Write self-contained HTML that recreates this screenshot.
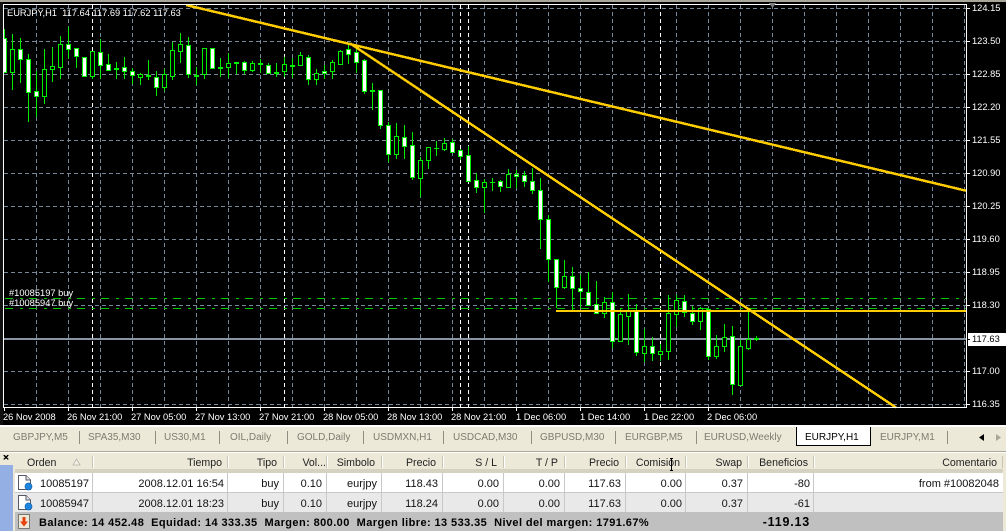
<!DOCTYPE html>
<html><head><meta charset="utf-8"><style>
html,body{margin:0;padding:0;width:1006px;height:531px;overflow:hidden;background:#ECE9D8}
svg{display:block;position:absolute;left:0;top:0}
text{font-family:"Liberation Sans",sans-serif;white-space:pre}
.c text{font-size:9.3px;fill:#fff}
.t text{font-size:10px;fill:#7c7c70}
.h text{font-size:10.6px;fill:#222}
.r text{font-size:11px;fill:#111}
.e{text-anchor:end}
.b text{font-size:11px;font-weight:bold;fill:#000;letter-spacing:.41px}
.b text.s{font-size:12.5px;letter-spacing:.8px}
</style></head><body>
<svg width="1006" height="531" viewBox="0 0 1006 531" xmlns="http://www.w3.org/2000/svg">
<rect x="0" y="0" width="1006" height="427" fill="#000"/>
<rect x="0" y="0" width="1006" height="2" fill="#a8a698"/>
<g shape-rendering="crispEdges">
<path fill="none" stroke="#778899" stroke-dasharray="4 3" d="M4 8.5H966M4 41.5H966M4 74.5H966M4 107.5H966M4 140.5H966M4 173.5H966M4 206.5H966M4 239.5H966M4 272.5H966M4 305.5H966M4 371.5H966M4 404.5H966"/>
<path fill="none" stroke="#778899" stroke-dasharray="4 3" d="M36.5 5V407M68.5 5V407M100.5 5V407M132.5 5V407M164.5 5V407M196.5 5V407M228.5 5V407M260.5 5V407M292.5 5V407M324.5 5V407M356.5 5V407M388.5 5V407M420.5 5V407M452.5 5V407M484.5 5V407M516.5 5V407M548.5 5V407M580.5 5V407M612.5 5V407M644.5 5V407M676.5 5V407M708.5 5V407M740.5 5V407M772.5 5V407M804.5 5V407M836.5 5V407M868.5 5V407M900.5 5V407M932.5 5V407M964.5 5V407"/>
<path fill="none" stroke="#fff" stroke-dasharray="4 3" d="M92.5 5V407M284.5 5V407M460.5 5V407M468.5 5V407M660.5 5V407"/>
<rect x="4" y="338" width="962" height="2" fill="#8a95a3"/>
<path fill="none" stroke="#00c800" stroke-dasharray="8 7 3 6" d="M5 298.5H966M5 308.5H966"/>
<path fill="none" stroke="#00ee00" d="M4.5 29V73M12.5 34V90M20.5 38V83M28.5 54V122M36.5 71V117M44.5 49V104M52.5 47V82M60.5 36V79M68.5 27V59M76.5 48V68M84.5 57V77M92.5 51V79M100.5 39V79M108.5 54V71M116.5 62V79M124.5 57V79M132.5 68V84M140.5 73V85M148.5 60V80M156.5 71V96M164.5 69V91M172.5 42V80M180.5 33V63M188.5 37V78M196.5 67V85M204.5 48V79M212.5 48V68M220.5 58V77M228.5 53V78M236.5 62V74M244.5 61V74M252.5 61V72M260.5 59V73M268.5 63V74M276.5 63V77M284.5 57V77M292.5 58V78M300.5 52V65M308.5 55V85M316.5 69V85M324.5 65V79M332.5 60V79M340.5 50V65M348.5 44V64M356.5 47V73M364.5 59V94M372.5 83V110M380.5 90V129M388.5 122V162M396.5 123V159M404.5 125V159M412.5 132V180M420.5 157V197M428.5 147V169M436.5 141V156M444.5 138V151M452.5 139V152M460.5 149V160M468.5 146V182M476.5 173V193M484.5 179V213M492.5 178V191M500.5 180V192M508.5 169V187M516.5 170V188M524.5 171V187M532.5 168V194M540.5 178V249M548.5 215V282M556.5 259V308M564.5 260V289M572.5 267V310M580.5 275V308M588.5 272V306M596.5 281V313M604.5 297V318M612.5 292V348M620.5 308V342M628.5 294V345M636.5 304V356M644.5 329V362M652.5 337V361M660.5 344V361M668.5 295V360M676.5 295V327M684.5 295V317M692.5 306V325M700.5 307V330M708.5 308V360M716.5 335V359M724.5 324V352M732.5 326V395M740.5 340V385M748.5 310V350M756.5 336V341"/>
<path fill="#00ee00" d="M114 68h5v2h-5zM194 75h5v2h-5zM218 67h5v2h-5zM234 62h5v2h-5zM258 63h5v2h-5zM274 72h5v2h-5zM290 65h5v2h-5zM370 90h5v2h-5zM434 148h5v1h-5zM490 182h5v1h-5zM754 338h5v2h-5z"/>
<path fill="#000" stroke="#00ee00" d="M10.5 49.5h4v23h-4zM42.5 69.5h4v27h-4zM50.5 66.5h4v3h-4zM58.5 44.5h4v23h-4zM90.5 51.5h4v25h-4zM138.5 74.5h4v3h-4zM162.5 74.5h4v13h-4zM170.5 50.5h4v26h-4zM178.5 44.5h4v7h-4zM202.5 48.5h4v26h-4zM226.5 63.5h4v4h-4zM250.5 63.5h4v7h-4zM282.5 64.5h4v7h-4zM298.5 55.5h4v10h-4zM314.5 73.5h4v6h-4zM330.5 62.5h4v9h-4zM338.5 51.5h4v13h-4zM394.5 136.5h4v18h-4zM418.5 160.5h4v18h-4zM426.5 147.5h4v13h-4zM442.5 143.5h4v6h-4zM482.5 182.5h4v5h-4zM506.5 174.5h4v13h-4zM562.5 276.5h4v11h-4zM602.5 302.5h4v11h-4zM618.5 314.5h4v27h-4zM626.5 311.5h4v5h-4zM642.5 346.5h4v7h-4zM658.5 351.5h4v3h-4zM666.5 313.5h4v38h-4zM674.5 300.5h4v14h-4zM698.5 308.5h4v13h-4zM714.5 346.5h4v10h-4zM722.5 337.5h4v9h-4zM738.5 346.5h4v39h-4zM746.5 339.5h4v9h-4z"/>
<path fill="#fff" stroke="#00ee00" d="M2.5 38.5h4v34h-4zM18.5 49.5h4v10h-4zM26.5 59.5h4v33h-4zM34.5 91.5h4v5h-4zM66.5 44.5h4v5h-4zM74.5 48.5h4v8h-4zM82.5 57.5h4v19h-4zM98.5 52.5h4v13h-4zM106.5 64.5h4v6h-4zM122.5 67.5h4v4h-4zM130.5 71.5h4v4h-4zM146.5 75.5h4v1h-4zM154.5 77.5h4v10h-4zM186.5 45.5h4v29h-4zM210.5 48.5h4v20h-4zM242.5 62.5h4v8h-4zM266.5 65.5h4v8h-4zM306.5 57.5h4v22h-4zM322.5 71.5h4v2h-4zM346.5 49.5h4v5h-4zM354.5 52.5h4v10h-4zM362.5 60.5h4v31h-4zM378.5 90.5h4v35h-4zM386.5 125.5h4v29h-4zM402.5 137.5h4v9h-4zM410.5 145.5h4v32h-4zM450.5 142.5h4v10h-4zM458.5 150.5h4v6h-4zM466.5 155.5h4v26h-4zM474.5 180.5h4v7h-4zM498.5 181.5h4v5h-4zM514.5 174.5h4v2h-4zM522.5 175.5h4v6h-4zM530.5 181.5h4v9h-4zM538.5 190.5h4v29h-4zM546.5 219.5h4v40h-4zM554.5 259.5h4v28h-4zM570.5 276.5h4v12h-4zM578.5 288.5h4v3h-4zM586.5 292.5h4v13h-4zM594.5 304.5h4v9h-4zM610.5 302.5h4v39h-4zM634.5 311.5h4v41h-4zM650.5 346.5h4v7h-4zM682.5 301.5h4v11h-4zM690.5 313.5h4v8h-4zM706.5 309.5h4v47h-4zM730.5 336.5h4v48h-4z"/>
<path fill="none" stroke="#FFCC00" stroke-width="2.5" d="M186 5L966 190.7M350 43.4L896 407.5"/>
<path fill="none" stroke="#FFCC00" stroke-width="2" d="M556 311H966"/>
<path fill="none" stroke="#fff" d="M3.5 4V408M3 4.5H967M966.5 4V408M3 407.5H967"/>
<path fill="none" stroke="#fff" d="M967 8.5h3M967 41.5h3M967 74.5h3M967 107.5h3M967 140.5h3M967 173.5h3M967 206.5h3M967 239.5h3M967 272.5h3M967 305.5h3M967 371.5h3M967 404.5h3M68.5 408v3M132.5 408v3M196.5 408v3M260.5 408v3M324.5 408v3M388.5 408v3M452.5 408v3M516.5 408v3M580.5 408v3M644.5 408v3M708.5 408v3M4.5 408v3"/>
<polygon points="769,3 776,3 772.5,8" fill="#808080"/>
<rect x="0" y="2" width="3" height="423" fill="#111"/>
<rect x="0" y="425" width="1006" height="2" fill="#fff"/>
<rect x="0" y="427" width="1006" height="104" fill="#ECE9D8"/>
<rect x="968" y="333" width="38" height="13" fill="#fff"/>
<rect x="967" y="339" width="3" height="1" fill="#000"/>
</g>
<g class="c">
<text x="7" y="16">EURJPY,H1  117.64 117.69 117.62 117.63</text>
<text x="9" y="296">#10085197 buy</text>
<text x="9" y="306">#10085947 buy</text>
<text x="972" y="11">124.15</text><text x="972" y="44">123.50</text><text x="972" y="77">122.85</text><text x="972" y="110">122.20</text><text x="972" y="143">121.55</text><text x="972" y="176">120.90</text><text x="972" y="209">120.25</text><text x="972" y="242">119.60</text><text x="972" y="275">118.95</text><text x="972" y="308">118.30</text><text x="972" y="342" style="fill:#000">117.63</text><text x="972" y="374">117.00</text><text x="972" y="407">116.35</text>
<text x="3" y="420">26 Nov 2008</text><text x="67" y="420">26 Nov 21:00</text><text x="131" y="420">27 Nov 05:00</text><text x="195" y="420">27 Nov 13:00</text><text x="259" y="420">27 Nov 21:00</text><text x="323" y="420">28 Nov 05:00</text><text x="387" y="420">28 Nov 13:00</text><text x="451" y="420">28 Nov 21:00</text><text x="516" y="420">1 Dec 06:00</text><text x="580" y="420">1 Dec 14:00</text><text x="644" y="420">1 Dec 22:00</text><text x="707" y="420">2 Dec 06:00</text>
</g>
<g shape-rendering="crispEdges">
<path fill="none" stroke="#8e8c80" d="M79.5 431V444M155.5 431V444M219.5 431V444M287.5 431V444M363.5 431V444M443.5 431V444M531.5 431V444M615.5 431V444M696.5 431V444M947.5 431V444"/>
<rect x="796" y="427" width="74" height="18" fill="#fff"/>
<path fill="none" stroke="#000" d="M796.5 427V445.5H870.5V427"/>
<rect x="0" y="451" width="1006" height="1" fill="#aca899"/>
<rect x="0" y="452" width="1006" height="1" fill="#fff"/>
<rect x="0" y="465" width="13" height="66" fill="#93afe4"/>
<rect x="15" y="469" width="988" height="4" fill="#d6d2c2"/>
<rect x="15" y="473" width="988" height="19" fill="#fff"/>
<rect x="15" y="492" width="988" height="1" fill="#c8c8c8"/>
<rect x="15" y="493" width="988" height="19" fill="#e9e9e9"/>
<rect x="15" y="512" width="988" height="19" fill="#c0c0c0"/>
<path fill="none" stroke="#c8c8c8" d="M92.5 473V512M227.5 473V512M283.5 473V512M326.5 473V512M381.5 473V512M442.5 473V512M503.5 473V512M564.5 473V512M625.5 473V512M685.5 473V512M747.5 473V512M813.5 473V512"/>
<path fill="none" stroke="#c8c5b2" d="M92.5 456V468M227.5 456V468M283.5 456V468M326.5 456V468M381.5 456V468M442.5 456V468M503.5 456V468M564.5 456V468M625.5 456V468M685.5 456V468M747.5 456V468M813.5 456V468M1002.5 456V468"/>
<path fill="none" stroke="#fff" d="M93.5 456V468M228.5 456V468M284.5 456V468M327.5 456V468M382.5 456V468M443.5 456V468M504.5 456V468M565.5 456V468M626.5 456V468M686.5 456V468M748.5 456V468M814.5 456V468"/>
<path fill="none" stroke="#000" stroke-width="1.4" d="M4 455l4 4.500M8 455l-4 4.500"/>
</g>
<polygon points="73,465 80,465 76.500,459" fill="#f4f2e8" stroke="#b5b3a5" stroke-width=".8"/>
<polygon points="984,434 979,437.500 984,441" fill="#000"/>
<polygon points="996,434 1001,437.500 996,441" fill="#a8a698"/>
<g>
<path d="M18.500 475.500H26L30.500 480V489.500H18.500Z" fill="#fff" stroke="#555a66"/>
<path d="M26 475.500V480H30.500" fill="#e8e8e8" stroke="#555a66"/>
<circle cx="28.500" cy="486.500" r="3.500" fill="#1f86e0" stroke="#1860a8" stroke-width=".7"/>
</g>
<g transform="translate(0,20)">
<path d="M18.500 475.500H26L30.500 480V489.500H18.500Z" fill="#fff" stroke="#555a66"/>
<path d="M26 475.500V480H30.500" fill="#e8e8e8" stroke="#555a66"/>
<circle cx="28.500" cy="486.500" r="3.500" fill="#1f86e0" stroke="#1860a8" stroke-width=".7"/>
</g>
<rect x="18.500" y="514.500" width="11" height="14" fill="#ece9d8" stroke="#777"/>
<path d="M22.500 517h3v4.500h2.500l-4 5-4-5h2.500z" fill="#e8400c"/>
<g class="t">
<text x="13" y="440">GBPJPY,M5</text><text x="88" y="440">SPA35,M30</text><text x="164" y="440">US30,M1</text><text x="230" y="440">OIL,Daily</text><text x="297" y="440">GOLD,Daily</text><text x="373" y="440">USDMXN,H1</text><text x="453" y="440">USDCAD,M30</text><text x="540" y="440">GBPUSD,M30</text><text x="625" y="440">EURGBP,M5</text><text x="704" y="440">EURUSD,Weekly</text><text x="880" y="440">EURJPY,M1</text>
<text x="805" y="440" style="fill:#000">EURJPY,H1</text>
</g>
<g class="h">
<text x="27" y="466">Orden</text>
<text class="e" x="222" y="466">Tiempo</text><text class="e" x="277" y="466">Tipo</text><text class="e" x="326" y="466">Vol...</text><text class="e" x="375" y="466">Simbolo</text><text class="e" x="436" y="466">Precio</text><text class="e" x="497" y="466">S / L</text><text class="e" x="558" y="466">T / P</text><text class="e" x="619" y="466">Precio</text><text class="e" x="680" y="466">Comisión</text><text class="e" x="742" y="466">Swap</text><text class="e" x="808" y="466">Beneficios</text><text class="e" x="997" y="466">Comentario</text>
</g>
<path shape-rendering="crispEdges" fill="none" stroke="#000" d="M671.500 459V470M670 458.500h3M670 470.500h3"/>
<g class="r">
<text x="40" y="487">10085197</text><text class="e" x="224" y="487">2008.12.01 16:54</text><text class="e" x="279" y="487">buy</text><text class="e" x="322" y="487">0.10</text><text class="e" x="377" y="487">eurjpy</text><text class="e" x="438" y="487">118.43</text><text class="e" x="499" y="487">0.00</text><text class="e" x="560" y="487">0.00</text><text class="e" x="621" y="487">117.63</text><text class="e" x="682" y="487">0.00</text><text class="e" x="743" y="487">0.37</text><text class="e" x="810" y="487">-80</text><text class="e" x="999" y="487">from #10082048</text>
<text x="40" y="507">10085947</text><text class="e" x="224" y="507">2008.12.01 18:23</text><text class="e" x="279" y="507">buy</text><text class="e" x="322" y="507">0.10</text><text class="e" x="377" y="507">eurjpy</text><text class="e" x="438" y="507">118.24</text><text class="e" x="499" y="507">0.00</text><text class="e" x="560" y="507">0.00</text><text class="e" x="621" y="507">117.63</text><text class="e" x="682" y="507">0.00</text><text class="e" x="743" y="507">0.37</text><text class="e" x="810" y="507">-61</text>
</g>
<g class="b">
<text x="39" y="526">Balance: 14 452.48  Equidad: 14 333.35  Margen: 800.00  Margen libre: 13 533.35  Nivel del margen: 1791.67%</text>
<text class="e s" x="810" y="526">-119.13</text>
</g>
</svg>
</body></html>
